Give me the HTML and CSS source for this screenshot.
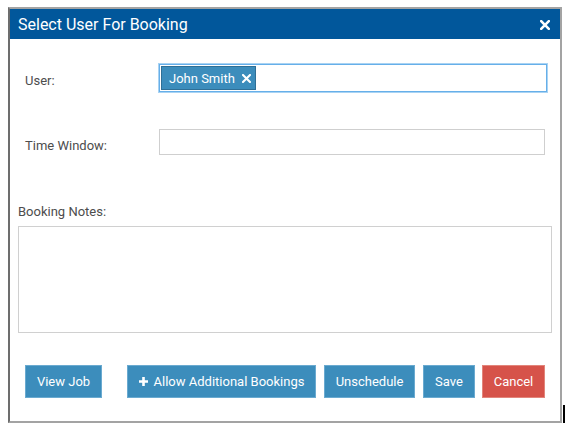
FILE: index.html
```html
<!DOCTYPE html>
<html>
<head>
<meta charset="utf-8">
<link rel="stylesheet" href="styles.css">
</head>
<body>
<div class="dialog">
  <div class="dialog-header">
    <span class="dialog-title">Select User For Booking</span>
    <svg class="dialog-close" width="10" height="10" viewBox="0 0 10 10"><path d="M1.2 1.2 L8.8 8.8 M8.8 1.2 L1.2 8.8" stroke="#fff" stroke-width="2.6" stroke-linecap="square"/></svg>
  </div>
  <div class="dialog-body">
    <div class="form-row row-user">
      <label class="form-label">User:</label>
      <div class="input tag-input focused">
        <span class="tag">John Smith <svg class="tag-x" width="9" height="9" viewBox="0 0 9 9"><path d="M1 1 L8 8 M8 1 L1 8" stroke="#fff" stroke-width="2.1" stroke-linecap="square"/></svg></span>
      </div>
    </div>
    <div class="form-row row-time">
      <label class="form-label">Time Window:</label>
      <div class="input time-input"></div>
    </div>
    <div class="notes-label">Booking Notes:</div>
    <div class="textarea"></div>
    <div class="actions">
      <button class="btn btn-primary btn-view">View Job</button>
      <div class="actions-right">
        <button class="btn btn-primary btn-allow"><svg class="plus" width="9" height="9" viewBox="0 0 9 9"><path d="M4.5 0 V9 M0 4.5 H9" stroke="#fff" stroke-width="2.6"/></svg>Allow Additional Bookings</button>
        <button class="btn btn-primary btn-unsched">Unschedule</button>
        <button class="btn btn-primary btn-save">Save</button>
        <button class="btn btn-danger btn-cancel">Cancel</button>
      </div>
    </div>
  </div>
</div>
<div class="cursor-mark"></div>
</body>
</html>
```

FILE: styles.css
```css
* { box-sizing: border-box; }
html, body { background: #ffffff; }
body {
  margin: 7px 0 0 8px;
  font-family: Roboto, "Liberation Sans", sans-serif;
}
.dialog {
  width: 554px;
  height: 416px;
  border: 2px solid #a3a3a3;
  border-left-color: #6d6d6d;
  background: #fff;
  display: flex;
  flex-direction: column;
}
.dialog-header {
  height: 30px;
  background: #01579b;
  color: #fff;
  display: flex;
  align-items: center;
  justify-content: space-between;
  padding: 0 10px 0 8px;
}
.dialog-title { font-size: 16px; }
.dialog-close { display: block; margin-top: 2px; }
.dialog-body {
  padding: 25px 13px 0 8px;
  display: flex;
  flex-direction: column;
}
.form-row { display: flex; align-items: flex-start; }
.form-label {
  width: 141px;
  padding-left: 7px;
  font-size: 13px;
  color: #4d4d4d;
}
.row-user .form-label { padding-top: 9px; }
.row-time { margin-top: 37px; }
.row-time .form-label { padding-top: 9px; }
.input {
  border: 1px solid #cfcfcf;
  background: #fff;
}
.tag-input {
  width: 388px;
  height: 28px;
  padding: 1px;
  display: flex;
  align-items: center;
}
.focused { border: 1px solid #66afe9; box-shadow: 0 0 0 1px #a9d3f3; }
.time-input { width: 386px; height: 26px; }
.tag {
  background: #3c8dbc;
  border: 1px solid #2f6f96;
  color: #fff;
  font-size: 13px;
  height: 24px;
  width: 95px;
  padding: 0 0 0 7px;
  display: flex;
  align-items: center;
  gap: 7px;
}
.tag-x { display: block; }
.notes-label {
  margin-top: 49px;
  font-size: 13px;
  color: #4d4d4d;
}
.textarea {
  margin-top: 7px;
  width: 534px;
  height: 107px;
  border: 1px solid #d0d0d0;
}
.actions {
  margin-top: 32px;
  padding: 0 2px 0 7px;
  display: flex;
  justify-content: space-between;
}
.actions-right { display: flex; gap: 8px; }
.btn {
  height: 33px;
  border: 1px solid #6aaad0;
  font-family: Roboto, "Liberation Sans", sans-serif;
  font-size: 13px;
  color: #fff;
  padding: 0;
  display: flex;
  align-items: center;
  justify-content: center;
  cursor: pointer;
}
.btn-primary { background: #3c8dbc; }
.btn-danger { background: #d6534a; border-color: #e2857b; }
.btn-view { width: 77px; }
.btn-allow { width: 189px; gap: 6px; }
.btn-unsched { width: 91px; }
.btn-save { width: 52px; margin-right: -1px; }
.btn-cancel { width: 63px; }
.plus { display: block; }
.cursor-mark {
  position: absolute;
  left: 563px;
  top: 405px;
  width: 2px;
  height: 18px;
  background: #000;
}
```
